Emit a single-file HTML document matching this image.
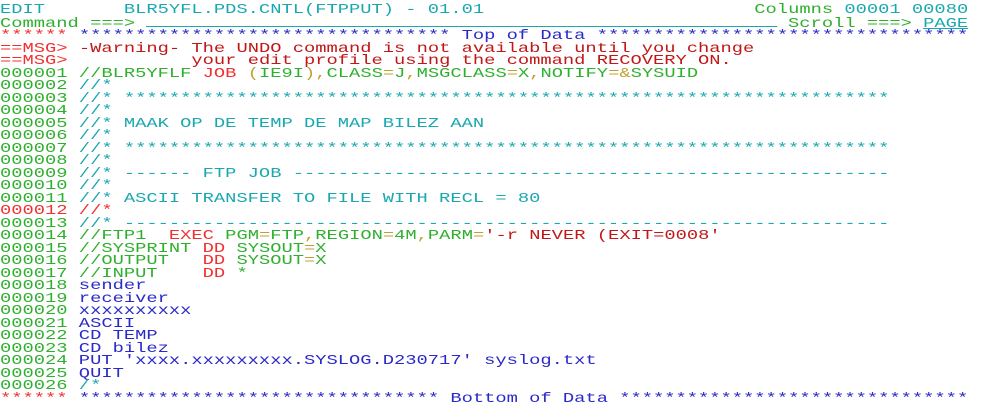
<!DOCTYPE html>
<html><head><meta charset="utf-8">
<style>
html,body{margin:0;padding:0;background:#fff;width:991px;height:403px;overflow:hidden}
#s{position:absolute;left:0;top:4px;transform:scaleX(1.34);transform-origin:0 0;
font-family:"Liberation Mono",monospace;font-size:14px;line-height:12.5px;white-space:pre}
.g{color:#2eb02e}.c{color:#1aa8b0}.b{color:#2a2ac8}.r{color:#f03030}.d{color:#c01818}.y{color:#c0a030}
.u{display:inline-block;width:56ch;height:9px;border-bottom:1px solid #1aa8b0}
.pg{text-decoration:underline}
</style></head><body><div id="s"><div><span class="c">EDIT       BLR5YFL.PDS.CNTL(FTPPUT) - 01.01</span>                        <span class="g">Columns </span><span class="c">00001 00080</span></div><div><span class="g">Command ===> </span><span class="u"></span> <span class="g">Scroll ===> </span><span class="c pg">PAGE</span></div><div><span class="r">******</span> <span class="b">********************************* Top of Data *********************************</span></div><div><span class="r">==MSG&gt;</span> <span class="d">-Warning- The UNDO command is not available until you change</span></div><div><span class="r">==MSG&gt;</span> <span class="d">          your edit profile using the command RECOVERY ON.</span></div><div><span class="g">000001 //BLR5YFLF </span><span class="r">JOB</span> <span class="y">(</span><span class="g">IE9I</span><span class="y">),</span><span class="g">CLASS</span><span class="y">=</span><span class="g">J</span><span class="y">,</span><span class="g">MSGCLASS</span><span class="y">=</span><span class="g">X</span><span class="y">,</span><span class="g">NOTIFY</span><span class="y">=&amp;</span><span class="g">SYSUID</span></div><div><span class="g">000002 </span><span class="c">//*</span></div><div><span class="g">000003 </span><span class="c">//* ********************************************************************</span></div><div><span class="g">000004 </span><span class="c">//*</span></div><div><span class="g">000005 </span><span class="c">//* MAAK OP DE TEMP DE MAP BILEZ AAN</span></div><div><span class="g">000006 </span><span class="c">//*</span></div><div><span class="g">000007 </span><span class="c">//* ********************************************************************</span></div><div><span class="g">000008 </span><span class="c">//*</span></div><div><span class="g">000009 </span><span class="c">//* ------ FTP JOB -----------------------------------------------------</span></div><div><span class="g">000010 </span><span class="c">//*</span></div><div><span class="g">000011 </span><span class="c">//* ASCII TRANSFER TO FILE WITH RECL = 80</span></div><div><span class="r">000012 //*</span></div><div><span class="g">000013 </span><span class="c">//* --------------------------------------------------------------------</span></div><div><span class="g">000014 //FTP1  </span><span class="r">EXEC</span> <span class="g">PGM</span><span class="y">=</span><span class="g">FTP</span><span class="y">,</span><span class="g">REGION</span><span class="y">=</span><span class="g">4M</span><span class="y">,</span><span class="g">PARM</span><span class="y">=</span><span class="d">'-r NEVER (EXIT=0008'</span></div><div><span class="g">000015 //SYSPRINT </span><span class="r">DD</span> <span class="g">SYSOUT</span><span class="y">=</span><span class="g">X</span></div><div><span class="g">000016 //OUTPUT   </span><span class="r">DD</span> <span class="g">SYSOUT</span><span class="y">=</span><span class="g">X</span></div><div><span class="g">000017 //INPUT    </span><span class="r">DD</span> <span class="g">*</span></div><div><span class="g">000018 </span><span class="b">sender</span></div><div><span class="g">000019 </span><span class="b">receiver</span></div><div><span class="g">000020 </span><span class="b">xxxxxxxxxx</span></div><div><span class="g">000021 </span><span class="b">ASCII</span></div><div><span class="g">000022 </span><span class="b">CD TEMP</span></div><div><span class="g">000023 </span><span class="b">CD bilez</span></div><div><span class="g">000024 </span><span class="b">PUT 'xxxx.xxxxxxxxx.SYSLOG.D230717' syslog.txt</span></div><div><span class="g">000025 </span><span class="b">QUIT</span></div><div><span class="g">000026 </span><span class="c">/*</span></div><div><span class="r">******</span> <span class="b">******************************** Bottom of Data *******************************</span></div></div></body></html>
